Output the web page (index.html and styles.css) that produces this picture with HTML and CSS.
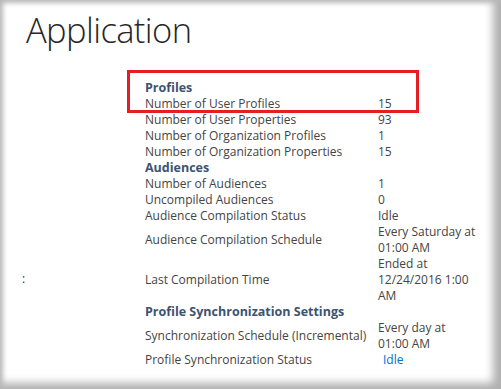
FILE: index.html
```html
<!DOCTYPE html>
<html>
<head>
<meta charset="utf-8">
<link rel="stylesheet" href="styles.css">
</head>
<body>
<div class="frame">
  <h1 class="title">Application</h1>
  <div class="main">
    <div class="colon">:</div>
    <div class="tablewrap">
      <div class="highlight"></div>
      <table class="stats">
        <colgroup><col class="c-lbl"><col class="c-val"></colgroup>
        <tr><td class="head" colspan="2">Profiles</td></tr>
        <tr><td>Number of User Profiles</td><td>15</td></tr>
        <tr><td>Number of User Properties</td><td>93</td></tr>
        <tr><td>Number of Organization Profiles</td><td>1</td></tr>
        <tr><td>Number of Organization Properties</td><td>15</td></tr>
        <tr><td class="head" colspan="2">Audiences</td></tr>
        <tr><td>Number of Audiences</td><td>1</td></tr>
        <tr><td>Uncompiled Audiences</td><td>0</td></tr>
        <tr><td>Audience Compilation Status</td><td>Idle</td></tr>
        <tr><td>Audience Compilation Schedule</td><td>Every Saturday at 01:00 AM</td></tr>
        <tr><td>Last Compilation Time</td><td>Ended at 12/24/2016 1:00 AM</td></tr>
        <tr><td class="head" colspan="2">Profile Synchronization Settings</td></tr>
        <tr><td>Synchronization Schedule (Incremental)</td><td>Every day at 01:00 AM</td></tr>
        <tr><td>Profile Synchronization Status</td><td><span class="link">Idle</span></td></tr>
      </table>
    </div>
  </div>
</div>
</body>
</html>
```
FILE: styles.css
```css
html, body {
  margin: 0;
  padding: 0;
  background: #ffffff;
}
.frame {
  width: 501px;
  height: 389px;
  box-sizing: border-box;
  background: #ffffff;
  box-shadow: inset 4px 4px 5px -1px #b8b8b8, inset -10px -8px 8px -2px #b0b0b0;
  padding: 8px 0 0 26px;
  font-family: "Open Sans", "Liberation Sans", sans-serif;
  color: #444444;
}
.title {
  margin: 0;
  font-family: "Open Sans", sans-serif;
  font-weight: 300;
  font-size: 34.5px;
  line-height: 44px;
  color: #262626;
  letter-spacing: -0.6px;
}
.main {
  display: flex;
  margin-top: 28px;
}
.colon {
  margin-left: -4px;
  font-size: 12px;
  padding-top: 190px;
  color: #333;
  flex: 0 0 123px;
}
.tablewrap {
  position: relative;
}
.highlight {
  position: absolute;
  left: -18px;
  top: -10px;
  width: 286px;
  height: 37px;
  border: 3px solid #e51d25;
}
.stats {
  border-collapse: collapse;
  table-layout: fixed;
  width: 333px;
  font-size: 12px;
  line-height: 16px;
}
.c-lbl {
  width: 233px;
}
.c-val {
  width: 100px;
}
.stats td {
  padding: 0;
  vertical-align: middle;
}
.stats .head {
  font-weight: bold;
  color: #3c5371;
  font-size: 12.5px;
}
.link {
  color: #0072c6;
  padding-left: 5px;
}
```
